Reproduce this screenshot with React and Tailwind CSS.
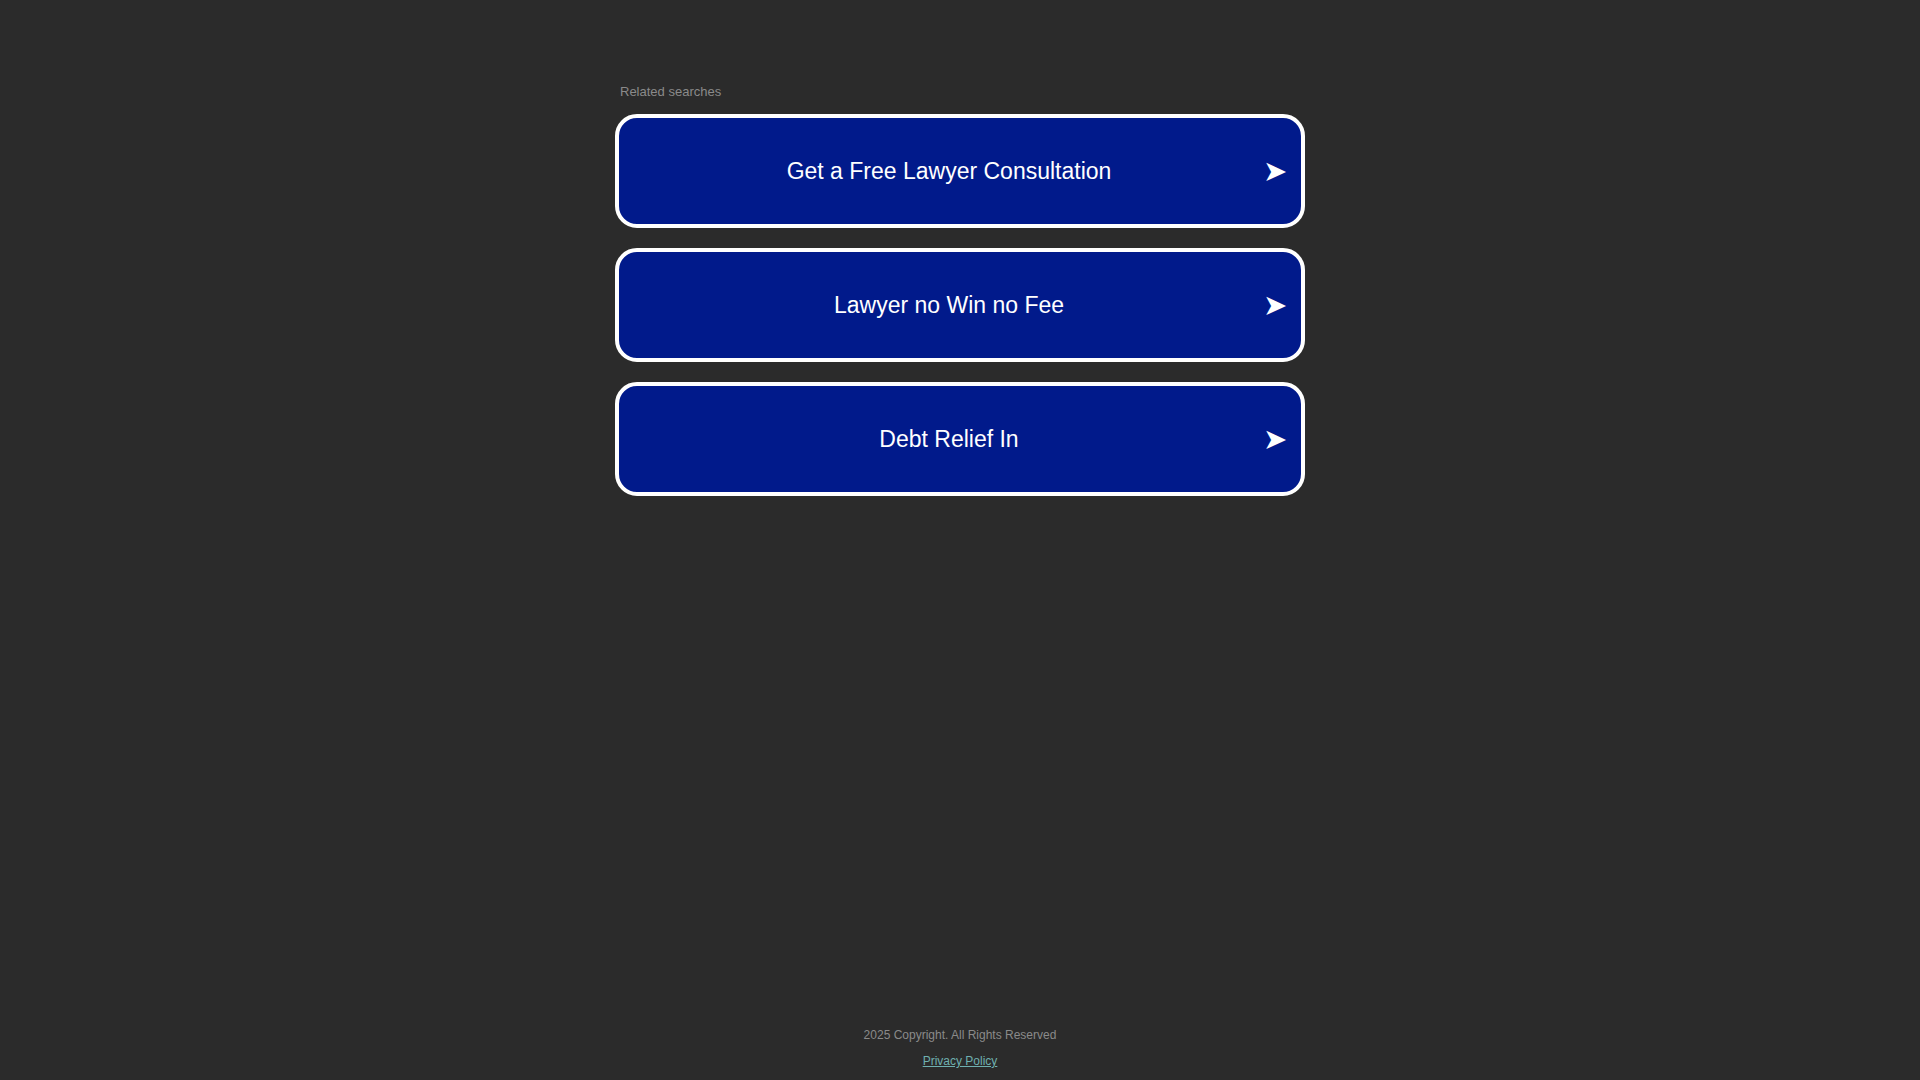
import React from 'react'

const LINKS = [
    'Get a Free Lawyer Consultation',
    'Lawyer no Win no Fee',
    'Debt Relief In',
]

function SearchLink({ label }) {
    return (
        <a
            href="#"
            className="flex items-center h-[114px] px-[16px] rounded-[22px] border-4 border-white bg-[#011a8b] text-white no-underline"
        >
            <span className="flex-1 text-center text-[23px] leading-none">{label}</span>
            <span className="w-[22px] text-[29px] leading-none">➤</span>
        </a>
    )
}

export default function App() {
    return (
        <div className="min-h-screen flex flex-col bg-[#2b2b2b] font-['Liberation_Sans',Arial,sans-serif]">
            <div className="w-[690px] mx-auto pt-[84px]">
                <p className="text-[13px] leading-[16px] text-[#8a8a8a] pl-[5px] mb-[14px]">Related searches</p>
                <div className="flex flex-col gap-[20px]">
                    {LINKS.map(l => <SearchLink key={l} label={l} />)}
                </div>
            </div>

            {/* Footer */}
            <div className="mt-auto pb-[12px] text-center text-[12px] leading-[14px]">
                <p className="text-[#8a8a8a] mb-[12px]">2025 Copyright. All Rights Reserved</p>
                <a href="#" className="text-[#6fb0b0] underline">Privacy Policy</a>
            </div>
        </div>
    )
}
